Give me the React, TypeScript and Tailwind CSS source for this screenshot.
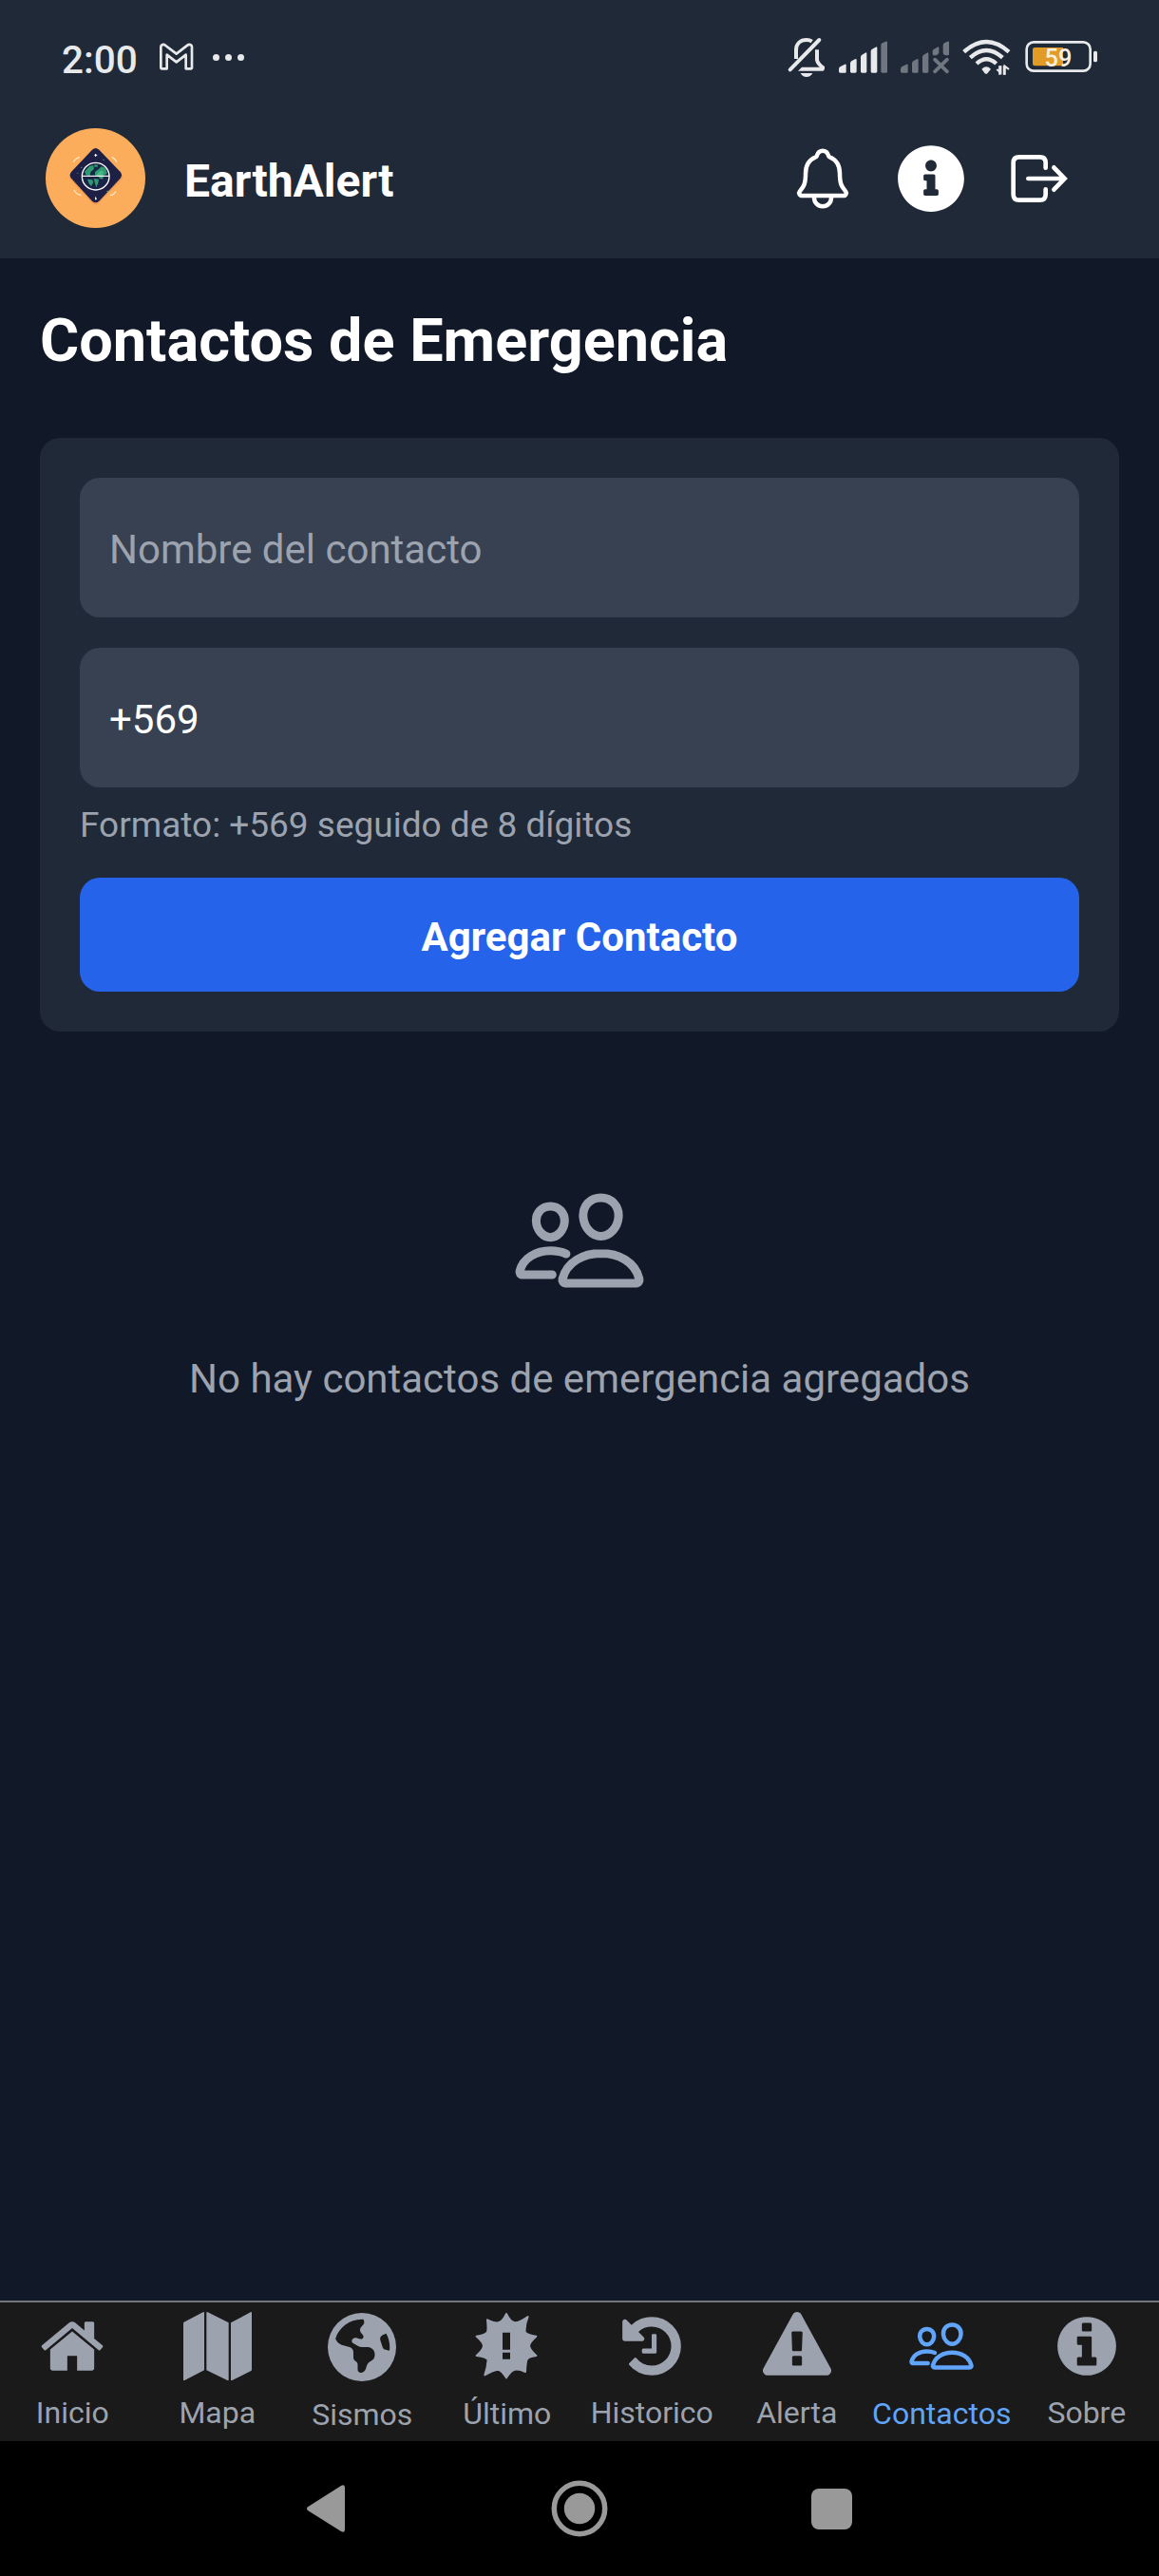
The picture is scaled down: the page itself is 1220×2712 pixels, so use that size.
import type { ReactNode } from "react";
import { IoNotificationsOutline, IoPeopleOutline } from "react-icons/io5";
import { FaInfoCircle } from "react-icons/fa";
import { FaEarthAmericas } from "react-icons/fa6";

function GmailIcon() {
  return (
    <svg className="ml-[21px] h-[34px] w-[40px]" viewBox="374 66 120 102" fill="none" stroke="#e8e9eb" strokeWidth="8" strokeLinejoin="round">
      <path d="M384 150V85c0-7 9-9 14-5l35 27 35-27c5-4 14-2 14 5v65q0 4-4 4h-15v-44l-30 23-30-23v44h-15q-4 0-4-4z" />
    </svg>
  );
}

function BellOffIcon() {
  return (
    <svg className="h-[50px] w-[42px]" viewBox="84 45 126 150" fill="none" stroke="#e8e9eb" strokeWidth="12">
      <path d="M114 126V98c0-20 13-32 33-32q10 0 17 5" />
      <path d="M95 160L187 66" strokeLinecap="round" />
      <path d="M180 97v32q2 12 18 24v5" />
      <path d="M203 152v7q0 5-5 5h-78l12-12z" fill="#e8e9eb" stroke="none" />
      <path d="M128 171h38q-6 12-19 12t-19-12z" fill="#e8e9eb" stroke="none" />
    </svg>
  );
}

function SignalIcon() {
  return (
    <svg className="ml-[11px] h-[50px] w-[55px]" viewBox="243 45 165 150" fill="#e8e9eb">
      <path d="M249 158q0-6 5-8l14-7q4-2 4 2v22q0 3-3 3h-16q-4 0-4-4z" />
      <path d="M285 140q0-5 4-7l11-6q5-3 5 2v37q0 4-4 4h-12q-4 0-4-4z" />
      <path d="M318 120q0-5 4-7l10-6q5-3 5 2v57q0 4-4 4h-11q-4 0-4-4z" />
      <path d="M350 102q0-5 4-7l11-6q5-3 5 2v75q0 4-4 4h-12q-4 0-4-4z" />
      <path d="M382 83q0-5 4-7l11-5q5-2 5 2v93q0 4-4 4h-12q-4 0-4-4z" fill="#707780" />
    </svg>
  );
}

function NoSignalIcon() {
  return (
    <svg className="ml-[10px] h-[50px] w-[55px]" viewBox="438 45 165 150" fill="#707780">
      <path d="M444 158q0-6 5-8l14-7q4-2 4 2v22q0 3-3 3h-16q-4 0-4-4z" />
      <path d="M480 140q0-5 4-7l11-6q5-3 5 2v37q0 4-4 4h-12q-4 0-4-4z" />
      <path d="M513 120q0-5 4-7l10-6q5-3 5 2v57q0 4-4 4h-11q-4 0-4-4z" />
      <path d="M545 102q0-5 4-7l11-6q5-3 5 2v15q0 3-3 5l-5 4h-8q-4 0-4-4z" />
      <path d="M578 83q0-5 4-7l10-5q5-2 5 2v38q0 4-4 4h-8q-7-3-7-8z" />
      <path d="M552 128l39 38M591 128l-39 38" stroke="#707780" strokeWidth="11" strokeLinecap="round" />
    </svg>
  );
}

function WifiIcon() {
  return (
    <svg className="ml-[11px] h-[50px] w-[52px]" viewBox="636 45 156 150" fill="none" stroke="#e8e9eb" strokeWidth="13">
      <path d="M644 104q71-64 142 0" />
      <path d="M664 122q51-46 102 0" />
      <path d="M684 141q31-29 62 0" />
      <path d="M700 158q15-14 29 0l-11 14q-4 3-8 0z" fill="#e8e9eb" stroke="none" />
      <path d="M748 159l12 10V148M786 159l-13-10v27" strokeWidth="6.500" />
      <path d="M757 148v28M771 148v28" strokeWidth="7" />
    </svg>
  );
}

function BatteryIcon() {
  return (
    <svg className="ml-[14px] h-[50px] w-[78px]" viewBox="834 45 234 150">
      <rect x="842" y="73" width="201" height="91" rx="22" fill="none" stroke="#e8e9eb" strokeWidth="8" />
      <path d="M868 90h89v58h-89q-7 0-7-7V97q0-7 7-7z" fill="#e29c26" />
      <rect x="1053" y="101" width="12" height="35" rx="5" fill="#e8e9eb" />
      <text x="942" y="151" textAnchor="middle" fill="#f6efe2" className="font-['Roboto'] text-[76px] font-medium">59</text>
    </svg>
  );
}

function ExitIcon() {
  return (
    <svg className="size-[72px]" viewBox="774 396 216 216" fill="none" stroke="currentColor" strokeWidth="14" strokeLinecap="round">
      <path d="M902 470v-16q0-18-18-18h-66q-18 0-18 18v100q0 18 18 18h66q18 0 18-18v-16" />
      <path d="M847 504h110M928 469l34 35-34 35" />
    </svg>
  );
}

function Logo() {
  return (
    <svg className="size-[105px]" viewBox="-66 -45 315 315">
      <circle cx="91.500" cy="112.500" r="157.500" fill="#fbad5b" />
      <path d="M82 28q10-10 20 0l72 72q8 8 0 16l-72 76q-10 10-20 0l-70-76q-8-8 0-16z" fill="#e98d4e" opacity=".6" />
      <path d="M81 23q11-10 22 0l67 70q8 10 0 20l-67 72q-11 10-22 0l-66-72q-8-10 0-20z" fill="#1d1f45" />
      <circle cx="92" cy="107" r="41" fill="#1a2447" />
      <path d="M57 92l16-18 12-2 2 12-10 8-4 14-12-4zM88 70h10v7H88zM90 92l12-8 8-8 14 4 4 18-10 6-4 12-10-2-2-8-12-2zM66 116l16 2 3 8-7 12-7-8zM86 114l16 2-2 12-6 14-4-12z" fill="#2f9a70" />
      <path d="M96 98l14-10 8 4-6 14-14 2z" fill="#46b787" />
      <circle cx="92" cy="107" r="43" fill="none" stroke="#fff" strokeWidth="4" />
      <path d="M48 106h88" stroke="#fff" strokeWidth="3.500" />
      <path d="M92 36v9M88 40h9M92 172v9M90 178h6" stroke="#fff" strokeWidth="3" />
      <path d="M22 63q4-12 20-17M142 46q12 4 17 17M24 150q6 14 22 16M138 167q13-2 18-14" fill="none" stroke="#ffe9c4" strokeWidth="3.500" />
      <path d="M45 79h4M115 55h4M127 154h6M34 97h3" stroke="#3fae8a" strokeWidth="3" />
    </svg>
  );
}

function SolidIcon({ d }: { d: string }) {
  return (
    <svg className="size-[72px]" viewBox="0 0 1792 1792" fill="currentColor">
      <path d={d} />
    </svg>
  );
}

const HOME =
  "M1472 992v480q0 26-19 45t-45 19h-384v-384h-256v384h-384q-26 0-45-19t-19-45v-480q0-1 .5-3t.5-3l575-474 575 474q1 2 1 6zm223-69l-62 74q-8 9-21 11h-3q-13 0-21-7l-692-577-692 577q-12 8-24 7-13-2-21-11l-62-74q-8-10-7-23.5t11-21.5l719-599q32-26 76-26t76 26l244 204v-195q0-14 9-23t23-9h192q14 0 23 9t9 23v408l219 182q10 8 11 21.500t-7 23.500z";
const HISTORY =
  "M1664 896q0 156-61 298t-164 245-245 164-298 61q-172 0-327-72.500t-264-204.500q-7-10-6.500-22.500t8.500-20.500l137-138q10-9 25-9 16 2 23 12 73 95 179 147t225 52q104 0 198.500-40.500t163.500-109.500 109.500-163.500 40.500-198.500-40.500-198.500-109.500-163.500-163.500-109.500-198.500-40.500q-98 0-188 35.500t-160 101.500l137 138q31 30 14 69-17 40-59 40h-448q-26 0-45-19t-19-45v-448q0-42 40-59 39-17 69 14l130 129q107-101 244.500-156.500t284.500-55.500q156 0 298 61t245 164 164 245 61 298zm-640-288v448q0 14-9 23t-23 9h-320q-14 0-23-9t-9-23v-64q0-14 9-23t23-9h224v-352q0-14 9-23t23-9h64q14 0 23 9t9 23z";
const WARNING =
  "M1024 1375v-190q0-14-9.500-23.500t-22.500-9.500h-192q-13 0-22.500 9.500t-9.500 23.500v190q0 14 9.500 23.500t22.500 9.500h192q13 0 22.500-9.500t9.500-23.500zm-2-374l18-459q0-12-10-19-13-11-24-11h-220q-11 0-24 11-10 7-10 21l17 457q0 10 10 16.500t24 6.500h185q14 0 23.500-6.500t10.500-16.500zm-14-934l768 1408q35 63-2 126-17 29-46.500 46t-63.500 17h-1536q-34 0-63.500-17t-46.500-46q-37-63-2-126l768-1408q17-31 47-49t65-18 65 18 47 49z";
const INFO =
  "M1152 1376v-160q0-14-9-23t-23-9h-96v-512q0-14-9-23t-23-9h-320q-14 0-23 9t-9 23v160q0 14 9 23t23 9h96v320h-96q-14 0-23 9t-9 23v160q0 14 9 23t23 9h448q14 0 23-9t9-23zm-128-896v-160q0-14-9-23t-23-9h-192q-14 0-23 9t-9 23v160q0 14 9 23t23 9h192q14 0 23-9t9-23zm640 416q0 209-103 385.500t-279.500 279.500-385.500 103-385.500-103-279.500-279.500-103-385.500 103-385.500 279.500-279.500 385.500-103 385.500 103 279.500 279.500 103 385.500z";

function MapIcon() {
  return (
    <svg className="size-[72px]" viewBox="579 102 216 216" fill="currentColor">
      <path d="M581 134l60-31q4-2 4 2v181l-62 32q-4 2-4-2V137q0-2 2-3zM652 105q0-4 4-2l66 33v180q0 4-4 2l-66-32zM729 136l62-33q4-2 4 2v180q0 2-2 3l-60 30q-4 2-4-2z" />
    </svg>
  );
}

function BurstIcon() {
  return (
    <svg className="size-[72px]" viewBox="18 22 216 216">
      <path
        d="M123 28Q136 55 150 56Q165 55 191 37Q180 62 182 86Q188 95 217 99Q196 118 195 129Q197 142 217 160Q190 164 187 174Q184 186 183 211Q164 202 150 204Q138 206 123 230Q108 206 97 204Q83 205 55 221Q64 194 65 172Q55 162 29 160Q50 142 51 129Q50 117 29 99Q58 95 63 86Q66 78 63 47Q85 58 97 56Q111 54 123 28Z"
        fill="currentColor" stroke="currentColor" strokeWidth="6" strokeLinejoin="round"
      />
      <path d="M111 87h24v54h-24zM111 150h24v21h-24z" fill="#1a1a1a" />
    </svg>
  );
}

const TABS: { label: string; icon: ReactNode; tone: string; text: string }[] = [
  { label: "Inicio", icon: <SolidIcon d={HOME} />, tone: "text-[#9ca3af]", text: "mt-[16px]" },
  { label: "Mapa", icon: <MapIcon />, tone: "text-[#9ca3af]", text: "mt-[16px]" },
  { label: "Sismos", icon: <FaEarthAmericas className="mt-px size-[72px]" />, tone: "text-[#9ca3af]", text: "mt-[17px]" },
  { label: "Último", icon: <BurstIcon />, tone: "text-[#9ca3af]", text: "mt-[17px]" },
  { label: "Historico", icon: <SolidIcon d={HISTORY} />, tone: "text-[#9ca3af]", text: "mt-[16px]" },
  { label: "Alerta", icon: <SolidIcon d={WARNING} />, tone: "text-[#9ca3af]", text: "mt-[16px]" },
  { label: "Contactos", icon: <IoPeopleOutline className="size-[72px]" />, tone: "text-[#60a5fa]", text: "mt-[17px]" },
  { label: "Sobre", icon: <SolidIcon d={INFO} />, tone: "text-[#9ca3af]", text: "mt-[16px]" },
];

export default function App() {
  return (
    <div className="flex h-[2712px] w-[1220px] flex-col overflow-hidden bg-[#111827] font-['Roboto',sans-serif] text-white">
      <header className="h-[272px] shrink-0 bg-[#1f2937]">
        <div className="flex h-[120px] items-center pr-[64px] pl-[65px]">
          <span className="mt-[5px] text-[40.5px] leading-[46px] font-medium text-[#e8e9eb]">2:00</span>
          <GmailIcon />
          <div className="ml-[18px] flex gap-[6px]">
            <i className="size-[7px] rounded-full bg-[#e8e9eb]" />
            <i className="size-[7px] rounded-full bg-[#e8e9eb]" />
            <i className="size-[7px] rounded-full bg-[#e8e9eb]" />
          </div>
          <div className="ml-auto flex items-center">
            <BellOffIcon />
            <SignalIcon />
            <NoSignalIcon />
            <WifiIcon />
            <BatteryIcon />
          </div>
        </div>
        <div className="flex h-[135px] items-center pr-[90px] pl-[48px]">
          <Logo />
          <h1 className="mt-[6px] ml-[41px] text-[48px] leading-[60px] font-bold">EarthAlert</h1>
          <div className="ml-auto flex gap-[42px]">
            <IoNotificationsOutline className="size-[72px]" />
            <FaInfoCircle className="size-[72px]" />
            <ExitIcon />
          </div>
        </div>
      </header>

      <main className="flex flex-1 flex-col px-[42px] pt-[45px]">
        <h2 className="text-[63px] leading-[84px] font-bold">Contactos de Emergencia</h2>
        <section className="mt-[60px] flex h-[625px] flex-col rounded-[21px] bg-[#1f2937] p-[42px]">
          <input placeholder="Nombre del contacto" className="h-[147px] rounded-[21px] bg-[#374151] px-[31px] pt-[4px] text-[42px] placeholder:text-[#9ca3af]" />
          <input defaultValue="+569" className="mt-[32px] h-[147px] rounded-[21px] bg-[#374151] px-[31px] pt-[4px] text-[42px]" />
          <p className="mt-[13px] text-[37px] leading-[53px] text-[#9ca3af]">Formato: +569 seguido de 8 dígitos</p>
          <button className="mt-[29px] h-[120px] rounded-[21px] bg-[#2563eb] pt-[5px] text-[42px] font-bold">Agregar Contacto</button>
        </section>
        <div className="mt-[148px] flex flex-col items-center text-[#9ca3af]">
          <IoPeopleOutline className="size-[144px]" />
          <p className="mt-[42px] text-[42px] leading-[64px]">No hay contactos de emergencia agregados</p>
        </div>
      </main>

      <nav className="grid h-[148px] shrink-0 grid-cols-8 border-t-2 border-[#72757b] bg-[#1a1a1a]">
        {TABS.map((t) => (
          <div key={t.label} className={`flex flex-col items-center pt-[10px] ${t.tone}`}>
            {t.icon}
            <span className={`text-[32px] leading-[36px] whitespace-nowrap ${t.text}`}>{t.label}</span>
          </div>
        ))}
      </nav>

      <footer className="flex h-[142px] shrink-0 items-center justify-center bg-black text-[#999999]">
        <svg className="h-[50px] w-[40px]" viewBox="0 0 40 50" fill="currentColor">
          <path d="M1 23.200L36 1q4-2 4 2v44q0 4-4 2L1 27q-2-2 0-3.800z" />
        </svg>
        <svg className="ml-[217px] size-[60px]" viewBox="0 0 60 60">
          <circle cx="30" cy="30" r="26.700" fill="none" stroke="currentColor" strokeWidth="5.500" />
          <circle cx="30" cy="30" r="16.200" fill="currentColor" />
        </svg>
        <div className="ml-[214px] size-[43px] rounded-[8px] bg-[#999999]" />
      </footer>
    </div>
  );
}
